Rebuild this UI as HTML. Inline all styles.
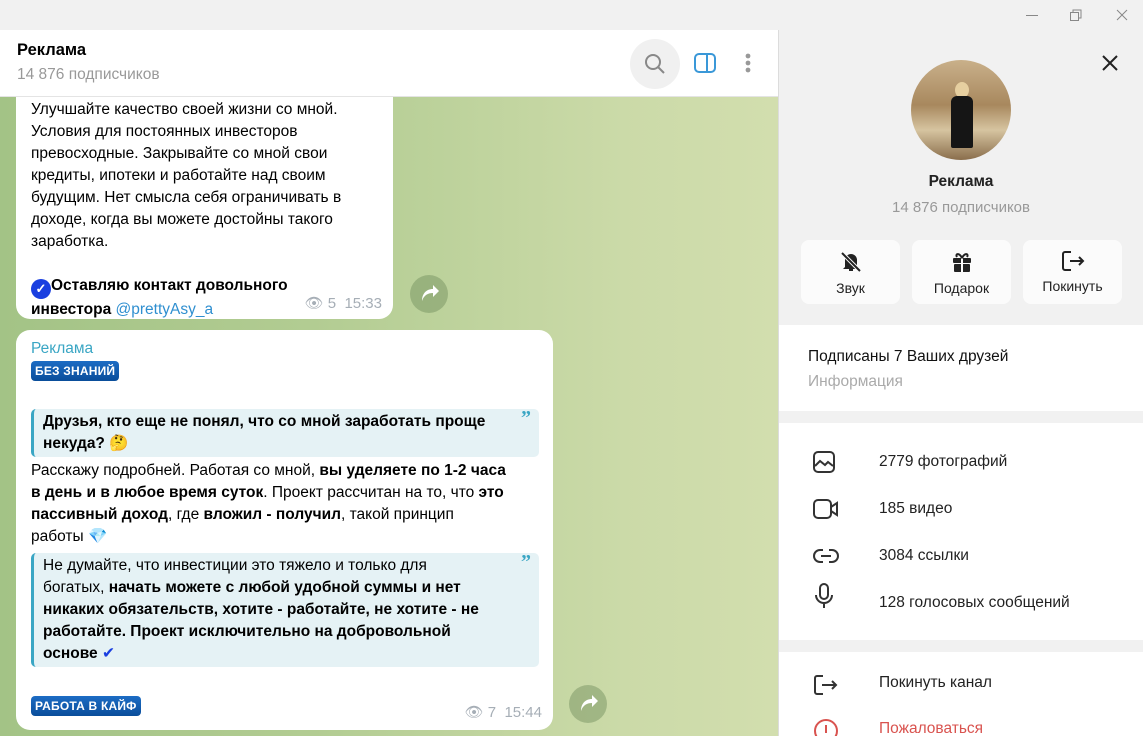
<!DOCTYPE html>
<html><head><meta charset="utf-8"><style>
*{margin:0;padding:0;box-sizing:border-box}
html,body{width:1143px;height:736px;overflow:hidden}
body{font-family:"Liberation Sans",sans-serif;position:relative;background:#f1f1f1;color:#000}
.top{position:absolute;left:0;top:0;width:1143px;height:30px;background:#f1f1f1}
.hdr{position:absolute;left:0;top:30px;width:778px;height:67px;background:#fff;border-bottom:1px solid #e4e4e4}
.chat{position:absolute;left:0;top:97px;width:778px;height:639px;background:linear-gradient(90deg,#a3c386 0%,#b2cc92 40%,#cbdaa8 80%,#d2deae 100%);overflow:hidden}
.right{position:absolute;left:778px;top:30px;width:365px;height:706px;background:#f1f1f1;border-left:1px solid #dcdcdc;overflow:hidden}
.bub{position:absolute;background:#fff;border-radius:14px;font-size:15.5px;line-height:22px;color:#000;white-space:nowrap}
.q{background:#e5f2f5;border-left:3px solid #3aa6c4;border-radius:5px;padding:2px 30px 2px 9px;position:relative}
.q:after{content:"\201D";position:absolute;right:8px;top:-2px;color:#3aa6c4;font-weight:bold;font-size:20px;font-family:"Liberation Serif",serif}
.badge{display:inline-block;background:linear-gradient(#1c6cc4,#0a4d9a);color:#fff;font-weight:bold;font-size:12px;border-radius:4px;padding:2px 4px;line-height:16px;letter-spacing:.2px}
.meta{position:absolute;color:#a6aeb6;font-size:15px}
.fwd{position:absolute;width:38px;height:38px;border-radius:50%;background:rgba(110,140,90,.45)}
.row{position:absolute;left:0;width:364px;background:#fff}
.it{position:absolute;left:100px;font-size:15.5px;color:#222}
.ic{position:absolute;left:34px}
.btn{position:absolute;top:210px;width:99px;height:64px;background:#fbfbfb;border-radius:8px;text-align:center;font-size:14px;color:#222}
.btn svg{display:block;margin:10px auto 0}
.btn div{margin-top:6px}
</style></head><body>
<div class="top">
<div style="position:absolute;left:1026px;top:15px;width:12px;height:1px;background:#888"></div>
<svg style="position:absolute;left:1070px;top:9px" width="13" height="12"><rect x="0.5" y="3.5" width="8" height="8" fill="none" stroke="#888"/><path d="M3 3V1h8v8H9" fill="none" stroke="#888"/></svg>
<svg style="position:absolute;left:1116px;top:9px" width="12" height="12"><path d="M1 1L11 11M11 1L1 11" stroke="#888"/></svg>
</div>
<div class="hdr">
<div style="position:absolute;left:17px;top:11px;font-size:16.5px;font-weight:bold">Реклама</div>
<div style="position:absolute;left:17px;top:36px;font-size:15.5px;color:#999">14 876 подписчиков</div>
<div style="position:absolute;left:630px;top:9px;width:50px;height:50px;border-radius:50%;background:#f0f0f0"></div>
<svg style="position:absolute;left:644px;top:23px" width="24" height="24"><circle cx="9" cy="9" r="7" fill="none" stroke="#888" stroke-width="2"/><path d="M14 14l6 6" stroke="#888" stroke-width="2"/></svg>
<svg style="position:absolute;left:693px;top:22px" width="24" height="24"><rect x="2" y="2" width="20" height="18" rx="4" fill="none" stroke="#3a98d8" stroke-width="2"/><path d="M14 2v18" stroke="#3a98d8" stroke-width="2"/></svg>
<svg style="position:absolute;left:744px;top:22px" width="8" height="24"><circle cx="4" cy="4" r="2.4" fill="#999"/><circle cx="4" cy="11" r="2.4" fill="#999"/><circle cx="4" cy="18" r="2.4" fill="#999"/></svg>
</div>
<div class="chat">
<div class="bub" style="left:16px;top:-40px;width:377px;height:262px;padding:42px 14px 0 15px">
Улучшайте качество своей жизни со мной.<br>Условия для постоянных инвесторов<br>превосходные. Закрывайте со мной свои<br>кредиты, ипотеки и работайте над своим<br>будущим. Нет смысла себя ограничивать в<br>доходе, когда вы можете достойны такого<br>заработка.<br><br>
<b><span style="display:inline-block;width:20px;height:20px;border-radius:50%;background:#1a3fe0;color:#fff;font-size:13px;text-align:center;line-height:20px;vertical-align:-3px">✓</span>Оставляю контакт довольного<br>инвестора</b> <span style="color:#2f8fd0">@prettyAsy_a</span>
<div class="meta" style="right:11px;bottom:4px">👁 5 &nbsp;15:33</div>
</div>
<div class="fwd" style="left:410px;top:178px"><svg width="38" height="38"><path d="M12 26c2-6 6-8 11-8v4l6-6-6-6v4c-7 0-11 5-11 12z" fill="#fff"/></svg></div>

<div class="bub" style="left:16px;top:233px;width:537px;height:400px;padding:8px 14px 0 15px">
<div style="color:#3aa6c4;font-size:15.5px;line-height:22px">Реклама</div>
<span class="badge">БЕЗ ЗНАНИЙ</span>
<div style="height:27px"></div>
<div class="q" style="font-weight:bold">Друзья, кто еще не понял, что со мной заработать проще<br>некуда? 🤔</div>
<div style="margin-top:3px">Расскажу подробней. Работая со мной, <b>вы уделяете по 1-2 часа<br>в день и в любое время суток</b>. Проект рассчитан на то, что <b>это<br>пассивный доход</b>, где <b>вложил - получил</b>, такой принцип<br>работы 💎</div>
<div class="q" style="margin-top:5px">Не думайте, что инвестиции это тяжело и только для<br>богатых, <b>начать можете с любой удобной суммы и нет<br>никаких обязательств, хотите - работайте, не хотите - не<br>работайте. Проект исключительно на добровольной<br>основе</b> <span style="color:#1a3fe0">✔</span></div>
<div style="margin-top:28px"><span class="badge">РАБОТА В КАЙФ</span></div>
<div class="meta" style="right:11px;bottom:6px">👁 7 &nbsp;15:44</div>
</div>
<div class="fwd" style="left:569px;top:588px"><svg width="38" height="38"><path d="M12 26c2-6 6-8 11-8v4l6-6-6-6v4c-7 0-11 5-11 12z" fill="#fff"/></svg></div>
</div>

<div class="right">
<svg style="position:absolute;left:322px;top:24px" width="18" height="18"><path d="M2 2L16 16M16 2L2 16" stroke="#222" stroke-width="2"/></svg>
<div style="position:absolute;left:132px;top:30px;width:100px;height:100px;border-radius:50%;overflow:hidden;background:linear-gradient(180deg,#c9b08a 0%,#a8885e 45%,#d6c4a0 70%,#8a6e4c 100%)">
<div style="position:absolute;left:44px;top:22px;width:14px;height:16px;border-radius:50%;background:#e6cfa0"></div>
<div style="position:absolute;left:40px;top:36px;width:22px;height:52px;background:#151515;border-radius:6px 6px 2px 2px"></div>
</div>
<div style="position:absolute;left:0;width:364px;top:143px;text-align:center;font-weight:bold;font-size:15.5px;color:#222">Реклама</div>
<div style="position:absolute;left:0;width:364px;top:169px;text-align:center;font-size:15px;color:#999">14 876 подписчиков</div>
<div class="btn" style="left:22px"><svg width="24" height="24"><path d="M6 17V10a6 6 0 0 1 12 0v7l2 2H4z" fill="#222"/><path d="M10 20h4" stroke="#222" stroke-width="2"/><path d="M3 3l18 18" stroke="#fbfbfb" stroke-width="4"/><path d="M3 3l18 18" stroke="#222" stroke-width="2"/></svg><div>Звук</div></div>
<div class="btn" style="left:133px"><svg width="24" height="24"><rect x="3" y="8" width="18" height="5" rx="1" fill="#222"/><rect x="4" y="14" width="16" height="8" rx="1" fill="#222"/><path d="M12 8v14" stroke="#fbfbfb" stroke-width="2"/><path d="M12 8C9 2 5 4 7 7M12 8c3-6 7-4 5-1" fill="none" stroke="#222" stroke-width="2"/></svg><div>Подарок</div></div>
<div class="btn" style="left:244px"><svg width="24" height="22"><path d="M10 2H4a2 2 0 0 0-2 2v14a2 2 0 0 0 2 2h6M9 11h13M18 7l4 4-4 4" fill="none" stroke="#222" stroke-width="2"/></svg><div>Покинуть</div></div>
<div class="row" style="top:295px;height:86px">
<div style="position:absolute;left:29px;top:23px;font-size:15.5px;color:#111">Подписаны 7 Ваших друзей</div>
<div style="position:absolute;left:29px;top:48px;font-size:15.5px;color:#aaa">Информация</div></div>
<div class="row" style="top:393px;height:217px">
<svg class="ic" style="top:28px" width="22" height="22"><rect x="1" y="1" width="20" height="20" rx="4" fill="none" stroke="#333" stroke-width="2"/><path d="M2 15l5-5 5 4 3-3 5 4" fill="none" stroke="#333" stroke-width="2"/></svg>
<div class="it" style="top:30px">2779 фотографий</div>
<svg class="ic" style="top:76px" width="26" height="20"><rect x="1" y="1" width="17" height="18" rx="4" fill="none" stroke="#333" stroke-width="2"/><path d="M18 8l6-4v12l-6-4" fill="none" stroke="#333" stroke-width="2"/></svg>
<div class="it" style="top:77px">185 видео</div>
<svg class="ic" style="top:125px" width="26" height="16"><path d="M10 2H7a6 6 0 0 0 0 12h3M16 2h3a6 6 0 0 1 0 12h-3M8 8h10" fill="none" stroke="#333" stroke-width="2"/></svg>
<div class="it" style="top:124px">3084 ссылки</div>
<svg class="ic" style="top:160px" width="22" height="26"><rect x="7" y="1" width="8" height="15" rx="4" fill="none" stroke="#333" stroke-width="2"/><path d="M3 12a8 8 0 0 0 16 0M11 20v5" fill="none" stroke="#333" stroke-width="2"/></svg>
<div class="it" style="top:171px">128 голосовых сообщений</div></div>
<div class="row" style="top:622px;height:84px">
<svg class="ic" style="top:22px" width="26" height="22"><path d="M10 2H4a2 2 0 0 0-2 2v14a2 2 0 0 0 2 2h6M9 11h14M19 7l4 4-4 4" fill="none" stroke="#333" stroke-width="2"/></svg>
<div class="it" style="top:22px">Покинуть канал</div>
<svg class="ic" style="top:66px" width="26" height="26"><circle cx="13" cy="13" r="11" fill="none" stroke="#d9534f" stroke-width="2"/><path d="M13 7v8" stroke="#d9534f" stroke-width="2"/></svg>
<div class="it" style="top:68px;color:#d9534f">Пожаловаться</div></div>
</div>
</body></html>
